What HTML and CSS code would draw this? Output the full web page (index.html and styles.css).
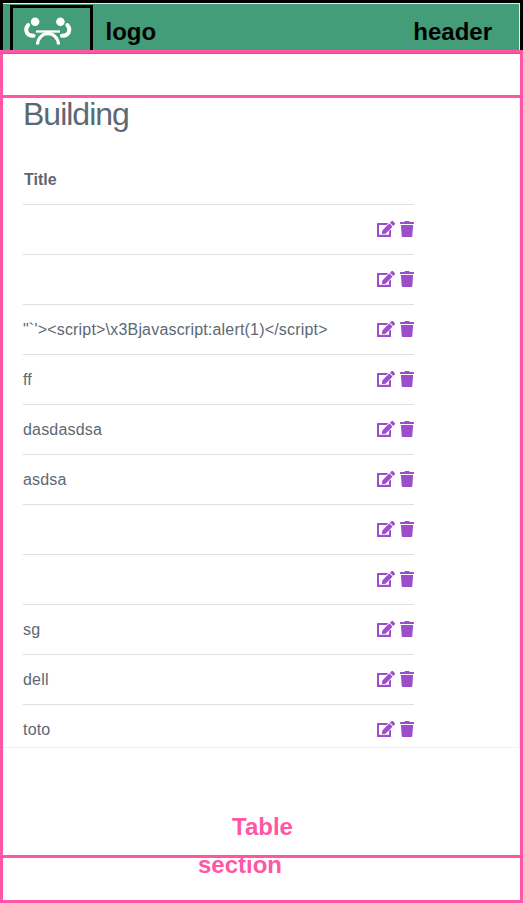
FILE: index.html
```html
<!DOCTYPE html>
<html lang="en">
<head>
<meta charset="utf-8">
<title>Building</title>
<link rel="stylesheet" href="styles.css">
</head>
<body>
<svg class="symbols" width="0" height="0" aria-hidden="true">
  <symbol id="edit" viewBox="0 0 576 512"><path d="M402.6 83.2l90.200 90.200c3.800 3.800 3.800 10 0 13.800L274.400 405.600l-92.800 10.300c-12.400 1.400-22.900-9.100-21.500-21.500l10.300-92.800L388.800 83.200c3.800-3.800 10-3.800 13.800 0zm162-22.900l-48.800-48.800c-15.200-15.200-39.900-15.200-55.200 0l-35.400 35.400c-3.800 3.800-3.800 10 0 13.800l90.200 90.200c3.800 3.800 10 3.800 13.800 0l35.400-35.400c15.200-15.300 15.200-40 0-55.200zM384 330V440H64V128h229.800c3.200 0 6.200-1.300 8.500-3.500l40-40c7.600-7.600 2.200-20.500-8.500-20.500H16C7 64 0 71 0 80v412c0 11 9 20 20 20h408c11 0 20-9 20-20V290c0-10.700-12.900-16-20.500-8.500l-40 40c-2.200 2.300-3.500 5.300-3.500 8.500z"/></symbol>
  <symbol id="trash" viewBox="0 0 448 512"><path d="M432 32H312l-9.400-18.700A24 24 0 0 0 281.100 0H166.800a23.700 23.700 0 0 0-21.400 13.300L136 32H16A16 16 0 0 0 0 48v32a16 16 0 0 0 16 16h416a16 16 0 0 0 16-16V48a16 16 0 0 0-16-16zM56 488a26 26 0 0 0 26 24h284a26 26 0 0 0 26-24L420 128H28z"/></symbol>
</svg>
<header class="header">
  <div class="bar">
    <div class="logo">
      <svg width="50" height="30" viewBox="0 0 50 30" fill="none" stroke="#fff" stroke-linecap="round">
        <circle cx="12.100" cy="5.800" r="4.300" fill="#fff" stroke="none"/>
        <circle cx="37.400" cy="5.800" r="4.300" fill="#fff" stroke="none"/>
        <path d="M5.200 9C2.300 12 2.700 16.500 5.600 18.600Q7.200 19.800 10.600 19.800M44.300 9C47.200 12 46.800 16.500 43.900 18.600Q42.300 19.800 38.900 19.800" stroke-width="4"/>
        <path d="M13 15.500H37" stroke-width="2.300" stroke-linecap="butt"/>
        <path d="M14.500 28.500C15.500 14 34.500 14 35.500 28.500" stroke-width="3.200" stroke-linecap="butt"/>
      </svg>
    </div>
    <span class="note">logo</span>
    <span class="note note-end">header</span>
  </div>
</header>
<main class="section">
  <div class="spacer"></div>
  <div class="content">
    <h1>Building</h1>
    <div class="table">
      <div class="head">Title</div>
      <div class="row"><span></span><svg class="edit"><use href="#edit"/></svg><svg class="trash"><use href="#trash"/></svg></div>
      <div class="row"><span></span><svg class="edit"><use href="#edit"/></svg><svg class="trash"><use href="#trash"/></svg></div>
      <div class="row"><span>"`'&gt;&lt;script&gt;\x3Bjavascript:alert(1)&lt;/script&gt;</span><svg class="edit"><use href="#edit"/></svg><svg class="trash"><use href="#trash"/></svg></div>
      <div class="row"><span>ff</span><svg class="edit"><use href="#edit"/></svg><svg class="trash"><use href="#trash"/></svg></div>
      <div class="row"><span>dasdasdsa</span><svg class="edit"><use href="#edit"/></svg><svg class="trash"><use href="#trash"/></svg></div>
      <div class="row"><span>asdsa</span><svg class="edit"><use href="#edit"/></svg><svg class="trash"><use href="#trash"/></svg></div>
      <div class="row"><span></span><svg class="edit"><use href="#edit"/></svg><svg class="trash"><use href="#trash"/></svg></div>
      <div class="row"><span></span><svg class="edit"><use href="#edit"/></svg><svg class="trash"><use href="#trash"/></svg></div>
      <div class="row"><span>sg</span><svg class="edit"><use href="#edit"/></svg><svg class="trash"><use href="#trash"/></svg></div>
      <div class="row"><span>dell</span><svg class="edit"><use href="#edit"/></svg><svg class="trash"><use href="#trash"/></svg></div>
      <div class="row last"><span>toto</span><svg class="edit"><use href="#edit"/></svg><svg class="trash"><use href="#trash"/></svg></div>
    </div>
  </div>
  <div class="caption">Table</div>
  <div class="footer">section</div>
</main>
</body>
</html>
```

FILE: styles.css
```css
* { box-sizing: border-box; }
body {
  margin: 0;
  width: 523px;
  height: 903px;
  overflow: hidden;
  display: flex;
  flex-direction: column;
  background: #fff;
  color: #5c6873;
  font: 16px/24px "Liberation Sans", Arial, sans-serif;
}
.symbols { display: none; }
.header {
  height: 50px;
  border: 3px solid #000;
  border-bottom: 0;
}
.bar {
  height: 47px;
  display: flex;
  align-items: flex-start;
  padding: 1px 27px 0 7px;
  background: #429d78;
  border-top: 1px solid #e4eeea;
  border-right: 1px solid #e4eeea;
}
.logo {
  width: 83px;
  height: 45px;
  border: 3px solid #000;
  border-bottom: 0;
  padding: 8px 0 0 10px;
}
.logo svg { display: block; }
.note {
  margin: 13px 0 0 12.5px;
  color: #000;
  font-size: 24px;
  font-weight: bold;
  line-height: 28px;
}
.note-end { margin-left: auto; }
.section {
  height: 853px;
  border: 3px solid #ff57a5;
  display: flex;
  flex-direction: column;
}
.spacer {
  height: 45px;
  border-top: 1px solid #429d78;
  border-bottom: 3px solid #ff57a5;
}
.content {
  height: 650px;
  padding-left: 20px;
  border-right: 1px solid #f0f1f3;
  border-bottom: 1px solid #f0f1f3;
}
h1 {
  margin: 0;
  height: 56px;
  font-size: 32px;
  font-weight: normal;
  line-height: 32px;
  letter-spacing: -1px;
}
.table { width: 391px; }
.head {
  height: 50px;
  padding: 14px 0 0 1px;
  font-weight: bold;
}
.row {
  height: 50px;
  display: flex;
  align-items: flex-start;
  padding-top: 16px;
  border-top: 1px solid #dedfe0;
}
.row span {
  flex: 1;
  margin-top: -3px;
  letter-spacing: 0.19px;
}
.row svg { height: 16px; fill: #9b4dca; }
.row .edit { width: 18px; margin-right: 5px; }
.row .trash { width: 14px; }
.row.last { height: 43px; }
.caption, .footer {
  color: #ff57a5;
  font-size: 24px;
  font-weight: bold;
  line-height: 28px;
}
.caption {
  height: 110px;
  padding: 65px 0 0 229px;
  border-bottom: 3px solid #ff57a5;
}
.footer {
  height: 42px;
  padding-left: 195px;
  line-height: 14px;
}
```
